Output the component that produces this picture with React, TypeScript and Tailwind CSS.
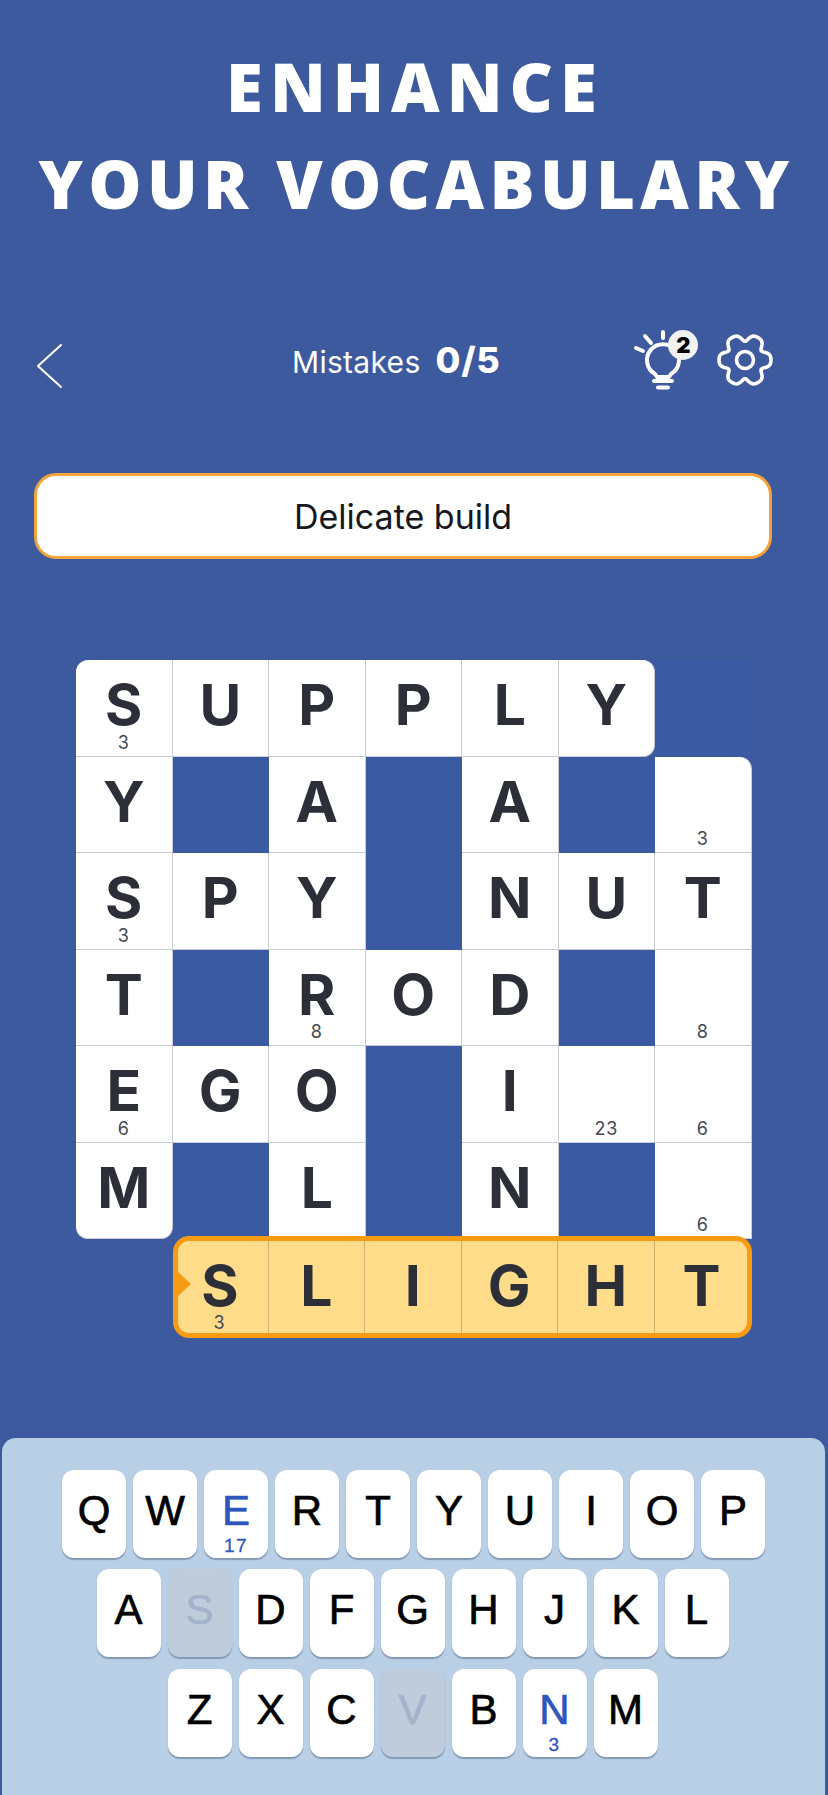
import React from 'react';

type Cell = { letter?: string; num?: string; round?: string };

// null = open square, page blue shows through
const grid: (Cell | null)[][] = [
  [{ letter: 'S', num: '3', round: 'rounded-tl-xl' }, { letter: 'U' }, { letter: 'P' }, { letter: 'P' }, { letter: 'L' }, { letter: 'Y', round: 'rounded-r-xl' }, null],
  [{ letter: 'Y' }, null, { letter: 'A' }, null, { letter: 'A' }, null, { num: '3', round: 'rounded-tr-xl' }],
  [{ letter: 'S', num: '3' }, { letter: 'P' }, { letter: 'Y' }, null, { letter: 'N' }, { letter: 'U' }, { letter: 'T' }],
  [{ letter: 'T' }, null, { letter: 'R', num: '8' }, { letter: 'O' }, { letter: 'D' }, null, { num: '8' }],
  [{ letter: 'E', num: '6' }, { letter: 'G' }, { letter: 'O' }, null, { letter: 'I' }, { num: '23' }, { num: '6' }],
  [{ letter: 'M', round: 'rounded-b-xl' }, null, { letter: 'L' }, null, { letter: 'N' }, null, { num: '6' }],
];

const activeWord = ['S', 'L', 'I', 'G', 'H', 'T'];

type Key = { k: string; num?: string; off?: boolean };
const keyRows: Key[][] = [
  [{ k: 'Q' }, { k: 'W' }, { k: 'E', num: '17' }, { k: 'R' }, { k: 'T' }, { k: 'Y' }, { k: 'U' }, { k: 'I' }, { k: 'O' }, { k: 'P' }],
  [{ k: 'A' }, { k: 'S', off: true }, { k: 'D' }, { k: 'F' }, { k: 'G' }, { k: 'H' }, { k: 'J' }, { k: 'K' }, { k: 'L' }],
  [{ k: 'Z' }, { k: 'X' }, { k: 'C' }, { k: 'V', off: true }, { k: 'B' }, { k: 'N', num: '3' }, { k: 'M' }],
];

const gearPath = () => {
  const pts: string[] = [];
  for (let i = 0; i < 180; i++) {
    const a = (i / 180) * Math.PI * 2;
    const r = 23.2 + 3.6 * Math.cos(6 * a) - 0.9 * Math.cos(12 * a);
    pts.push(`${(28 + r * Math.cos(a)).toFixed(2)} ${(28 + r * Math.sin(a)).toFixed(2)}`);
  }
  return `M${pts.join('L')}Z`;
};

const BulbIcon = () => (
  <div className="relative w-[66px] h-[60px]">
    <svg width="66" height="60" viewBox="0 0 66 60" fill="none" stroke="white" strokeWidth="4" strokeLinecap="round" strokeLinejoin="round">
      <path d="M25 47L23 44A16 16 0 1 1 39 44L37 47Z" />
      <path d="M22 51H40M26 57.5H36" />
      <path d="M31 2V8M13 6L19 13M4 18L11 21" />
    </svg>
    <div className="absolute right-0 top-0 w-[30px] h-[30px] rounded-full bg-[#f2f2f2] flex items-center justify-center font-['Inter',sans-serif] font-black text-[22px] leading-none text-black">
      2
    </div>
  </div>
);

const App: React.FC = () => {
  return (
    <div className="w-[828px] h-[1795px] overflow-hidden bg-[#3d5a9e] pt-[38px] font-['Inter',sans-serif]">
      <h1 className="text-center text-white font-['Open_Sans',sans-serif] font-extrabold text-[67px] leading-[97px]">
        <div className="pl-[2px] tracking-[7px]">ENHANCE</div>
        <div className="pl-[5px] tracking-[5.3px]">YOUR VOCABULARY</div>
      </h1>

      <div className="mt-[98px] h-[60px] flex items-center pl-[37px]">
        <svg className="mt-[12px]" width="25" height="44" viewBox="0 0 25 44" fill="none" stroke="white" strokeWidth="2" strokeLinecap="round">
          <path d="M24 1L1 22L24 43" />
        </svg>
        <div className="ml-[230px] flex items-baseline text-white">
          <span className="text-[30px] tracking-[0.01em]">Mistakes</span>
          <span className="ml-[15px] text-[36px] font-extrabold tracking-[0.02em]">0/5</span>
        </div>
        <div className="ml-[132px]">
          <BulbIcon />
        </div>
        <svg className="ml-[19px]" width="56" height="56" viewBox="0 0 56 56" fill="none" stroke="white" strokeWidth="3.6" strokeLinejoin="round">
          <path d={gearPath()} />
          <circle cx="28" cy="28" r="8.5" />
        </svg>
      </div>

      <div className="mt-[83px] mx-[34px] w-[738px] h-[86px] rounded-[22px] bg-white border-[3px] border-[#f2a33a] flex items-center justify-center text-[34px] text-[#16181d]">
        Delicate build
      </div>

      <div className="mt-[101px] ml-[76px] grid grid-cols-[repeat(7,96.5px)] grid-rows-[repeat(6,96.5px)_100px]">
        {grid.flat().map((cell, i) =>
          cell ? (
            <div
              key={i}
              className={`relative bg-white border-r border-b border-[#c8ccd4] flex items-center justify-center pb-[6px] text-[#2c2f38] font-bold text-[57px] leading-none ${cell.round ?? ''}`}
            >
              {cell.letter}
              {cell.num && (
                <span className="absolute inset-x-0 bottom-[4px] text-center text-[18px] leading-[18px] font-normal text-[#44474f] tracking-[0.04em]">{cell.num}</span>
              )}
            </div>
          ) : (
            <div key={i} className="bg-[#3a5ba3]" />
          )
        )}
        <div className="col-start-2 col-span-6 relative -mt-[3px] h-[102px] flex rounded-[16px] border-[5px] border-[#f89b12] bg-[#ffdc8a] overflow-hidden">
          {activeWord.map((l, i) => (
            <div
              key={i}
              className={`relative flex items-center justify-center pb-[4px] text-[#2c2f38] font-bold text-[57px] leading-none ${
                i === 0 ? 'w-[91px] shrink-0 pr-[5px] border-r border-[#cdb06c]' : i === 5 ? 'flex-1 pl-[2px]' : 'w-[96.5px] shrink-0 border-r border-[#cdb06c]'
              }`}
            >
              {l}
              {i === 0 && (
                <span className="absolute left-0 right-[7px] bottom-[1px] text-center text-[18px] leading-[18px] font-normal text-[#44474f]">3</span>
              )}
            </div>
          ))}
          <div className="absolute left-0 top-[31px] w-0 h-0 border-y-[12px] border-y-transparent border-l-[13px] border-l-[#f89b12]" />
        </div>
      </div>

      <div className="mt-[99px] ml-[2px] mr-[3px] h-[357px] rounded-t-[14px] bg-[#b9cfe6] pt-[32px] flex flex-col gap-[11px] font-['Liberation_Sans',sans-serif]">
        {keyRows.map((row, r) => (
          <div key={r} className={`flex justify-center gap-[7px] ${r === 1 ? 'pr-[2px]' : ''} ${r === 2 ? 'mt-[1px] pr-[2px]' : ''}`}>
            {row.map(key => (
              <div
                key={key.k}
                className={`relative w-[64px] h-[88px] rounded-[12px] flex items-center justify-center pb-[6px] text-[42px] leading-none [-webkit-text-stroke:0.7px_currentColor] shadow-[0_1.5px_1px_rgba(90,110,140,0.55)] ${
                  key.off ? 'bg-[#bfccdb] text-[#a3b3ca]' : key.num ? 'bg-white text-[#2e56bd]' : 'bg-white text-black'
                }`}
              >
                {key.k}
                {key.num && (
                  <span className="absolute inset-x-0 bottom-[2px] text-center text-[19px] leading-[20px] tracking-[0.08em] [-webkit-text-stroke:0.3px_currentColor]">{key.num}</span>
                )}
              </div>
            ))}
          </div>
        ))}
      </div>
    </div>
  );
};

export default App;
